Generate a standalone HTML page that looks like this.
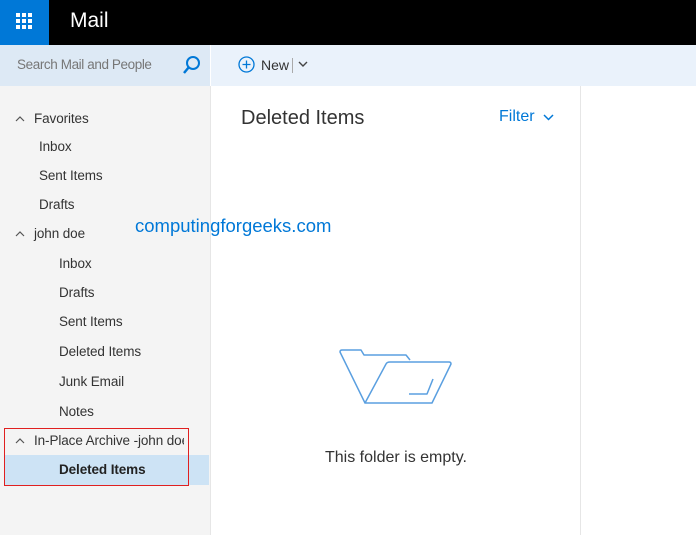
<!DOCTYPE html>
<html><head><style>
body{margin:0;width:696px;height:535px;overflow:hidden;font-family:"Liberation Sans",sans-serif;background:#fff;position:relative}
.abs{position:absolute}
.t{font-size:13.5px;color:#333;letter-spacing:-0.1px}
</style></head><body>
<div class="abs" style="left:0;top:0;width:696px;height:45px;background:#000"></div>
<div class="abs" style="left:0;top:0;width:49px;height:45px;background:#0078d7"></div>
<svg class="abs" style="left:16px;top:13px" width="18" height="18">
<g fill="#fff"><rect x="0" y="0" width="4" height="4"/><rect x="6" y="0" width="4" height="4"/><rect x="12" y="0" width="4" height="4"/><rect x="0" y="6" width="4" height="4"/><rect x="6" y="6" width="4" height="4"/><rect x="12" y="6" width="4" height="4"/><rect x="0" y="12" width="4" height="4"/><rect x="6" y="12" width="4" height="4"/><rect x="12" y="12" width="4" height="4"/></g></svg>
<div class="abs" style="left:70px;top:9px;color:#fff;font-size:21px">Mail</div>
<div class="abs" style="left:0;top:45px;width:210px;height:41px;background:#dde9f5"></div>
<div class="abs" style="left:211px;top:45px;width:485px;height:41px;background:#eaf2fb"></div>
<div class="abs" style="left:17px;top:57px;font-size:13.5px;color:#777;letter-spacing:-0.4px">Search Mail and People</div>
<svg class="abs" style="left:182px;top:55px" width="20" height="20"><circle cx="11" cy="8" r="6" fill="none" stroke="#0078d7" stroke-width="2"/><line x1="7" y1="12" x2="2" y2="18" stroke="#0078d7" stroke-width="2.5"/></svg>
<svg class="abs" style="left:238px;top:56px" width="18" height="18"><circle cx="8.5" cy="8.5" r="7.5" fill="none" stroke="#0078d7" stroke-width="1.3"/><path d="M8.5 4.5v8M4.5 8.5h8" stroke="#0078d7" stroke-width="1.3"/></svg>
<div class="abs" style="left:261px;top:57px;font-size:14px;color:#333">New</div>
<div class="abs" style="left:292px;top:58px;width:1px;height:15px;background:#aaa"></div>
<svg class="abs" style="left:298px;top:61px" width="10" height="8"><path d="M1 1l4 4 4-4" fill="none" stroke="#444" stroke-width="1.4"/></svg>
<div class="abs" style="left:0;top:86px;width:210px;height:449px;background:#f4f4f4"></div>
<div class="abs" style="left:210px;top:86px;width:1px;height:449px;background:#e6e6e6"></div>
<div class="abs" style="left:580px;top:86px;width:1px;height:449px;background:#e6e6e6"></div>
<svg class="abs" style="left:15px;top:115px" width="10" height="8"><path d="M1 6l4-4 4 4" fill="none" stroke="#555" stroke-width="1.2"/></svg>
<div class="abs t" style="left:34px;top:111px">Favorites</div>
<div class="abs t" style="left:39px;top:139px">Inbox</div>
<div class="abs t" style="left:39px;top:168px">Sent Items</div>
<div class="abs t" style="left:39px;top:197px">Drafts</div>
<svg class="abs" style="left:15px;top:230px" width="10" height="8"><path d="M1 6l4-4 4 4" fill="none" stroke="#555" stroke-width="1.2"/></svg>
<div class="abs t" style="left:34px;top:226px">john doe</div>
<div class="abs t" style="left:59px;top:256px">Inbox</div>
<div class="abs t" style="left:59px;top:285px">Drafts</div>
<div class="abs t" style="left:59px;top:314px">Sent Items</div>
<div class="abs t" style="left:59px;top:344px">Deleted Items</div>
<div class="abs t" style="left:59px;top:374px">Junk Email</div>
<div class="abs t" style="left:59px;top:404px">Notes</div>
<svg class="abs" style="left:15px;top:437px" width="10" height="8"><path d="M1 6l4-4 4 4" fill="none" stroke="#555" stroke-width="1.2"/></svg>
<div class="abs t" style="left:34px;top:433px;white-space:nowrap;width:150px;overflow:hidden">In-Place Archive -john doe</div>
<div class="abs" style="left:5px;top:455px;width:204px;height:30px;background:#cde3f5"></div>
<div class="abs t" style="left:59px;top:462px;font-weight:bold;color:#222">Deleted Items</div>
<div class="abs" style="left:4px;top:428px;width:183px;height:56px;border:1.5px solid #e02020"></div>
<div class="abs" style="left:241px;top:107px;font-size:20px;color:#333">Deleted Items</div>
<div class="abs" style="left:499px;top:108px;font-size:16px;color:#0078d7">Filter</div>
<svg class="abs" style="left:543px;top:114px" width="11" height="8"><path d="M1 1l4.5 4.5L10 1" fill="none" stroke="#0078d7" stroke-width="1.5"/></svg>
<div class="abs" style="left:135px;top:215px;font-size:18.5px;color:#0078d7">computingforgeeks.com</div>
<svg class="abs" style="left:330px;top:340px" width="130" height="75"><g fill="none" stroke="#5a9fe0" stroke-width="1.5" stroke-linejoin="round"><path d="M35 63L10 12Q10 10 12 10H31L34 15H76L80 20"/><path d="M35 63L56 24Q57 22 60 22H119Q121 22 121 24L102 63Z"/><path d="M103 39L97 54H79"/></g></svg>
<div class="abs" style="left:325px;top:449px;font-size:16px;color:#333">This folder is empty.</div>
</body></html>
